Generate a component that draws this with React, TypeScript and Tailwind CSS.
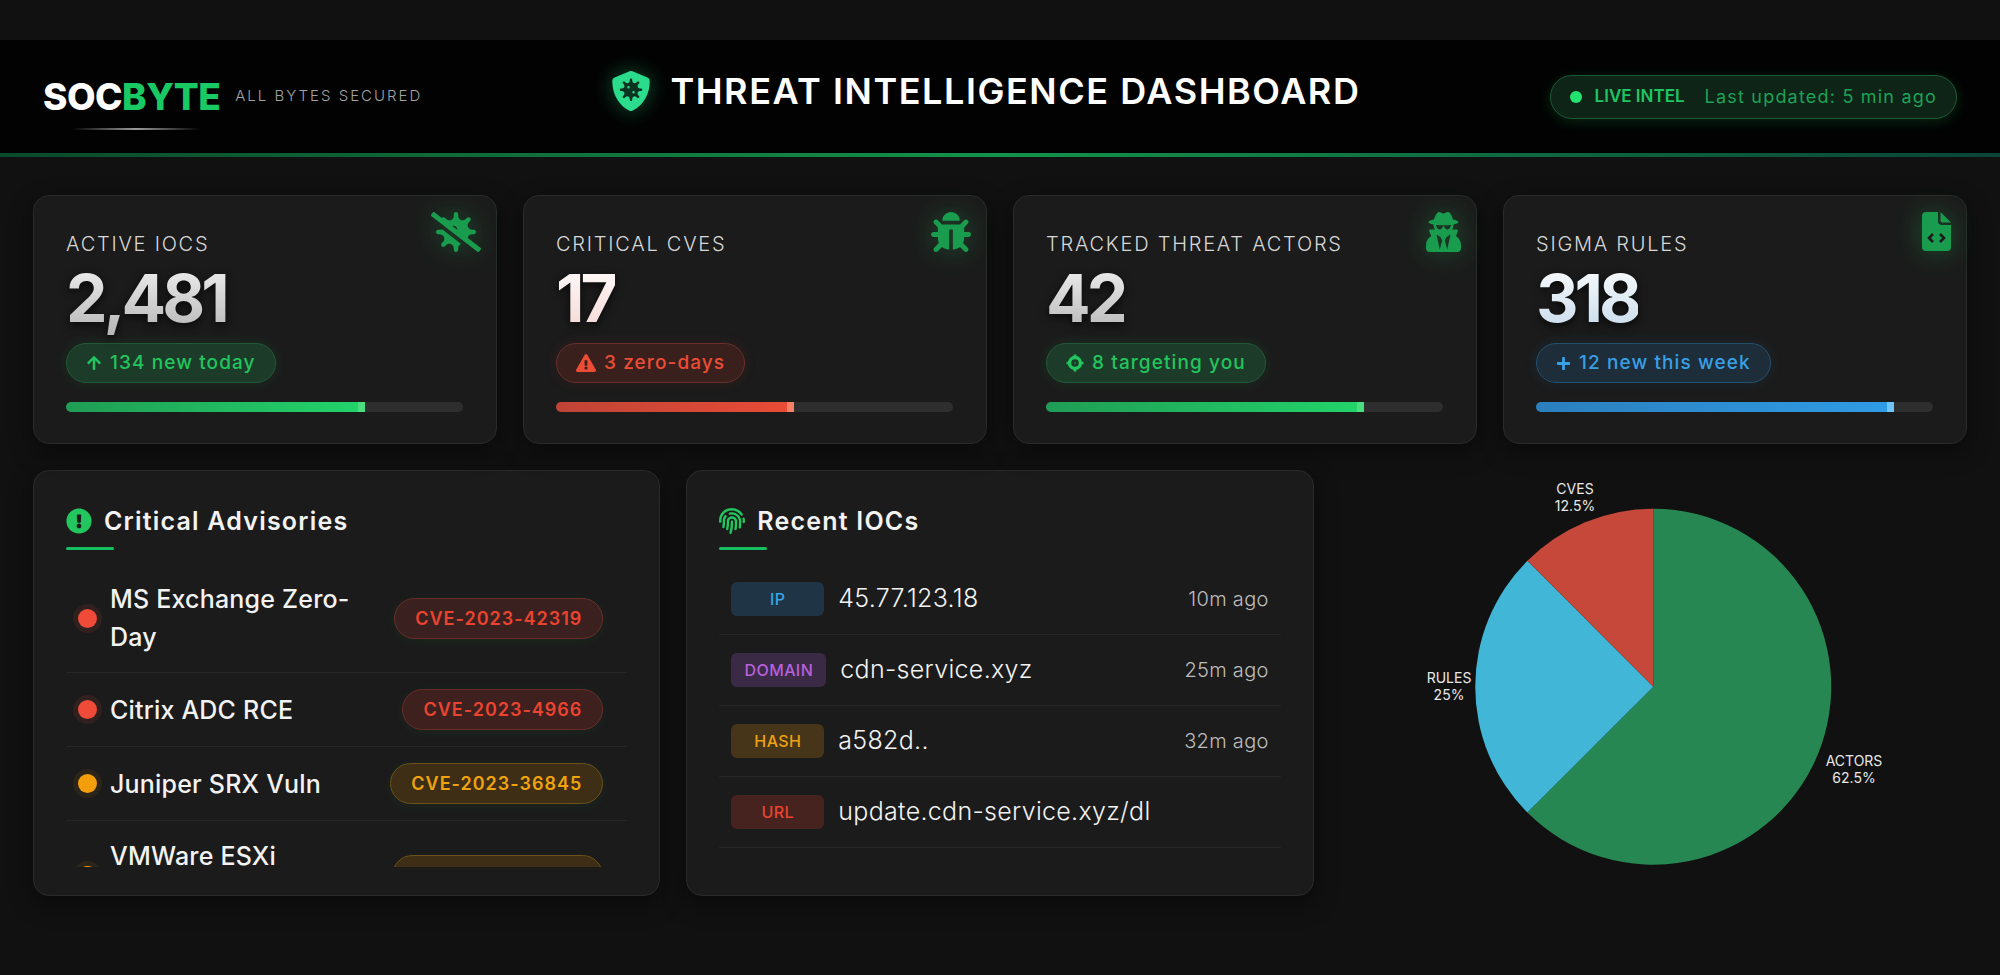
import {
  FaArrowUp,
  FaBug,
  FaExclamationCircle,
  FaExclamationTriangle,
  FaFingerprint,
  FaPlus,
  FaShieldVirus,
  FaUserSecret,
  FaVirusSlash,
} from "react-icons/fa";

function TargetIcon() {
  return (
    <svg className="h-[18px] w-[18px]" viewBox="0 0 18 18" fill="none" stroke="currentColor">
      <circle cx="9" cy="9" r="5.5" strokeWidth="3.4" />
      <path d="M9 0.5V3M9 15V17.5M0.5 9H3M15 9H17.5" strokeWidth="2.6" />
      <circle cx="9" cy="9" r="1" strokeWidth="0" fill="currentColor" opacity="0.5" />
    </svg>
  );
}

function FileCodeIcon() {
  return (
    <svg className="h-[39px] w-[29px]" viewBox="0 0 29 39" fill="currentColor">
      <path d="M4 0H16V9Q16 13 20 13H29V35Q29 39 25 39H4Q0 39 0 35V4Q0 0 4 0Z" />
      <path d="M18.5 0L29 10.5H20.5Q18.5 10.5 18.5 8.5Z" />
      <path d="M11 22L7 26L11 30M18 22L22 26L18 30" fill="none" stroke="#1b1b1b" strokeWidth="2.6" />
    </svg>
  );
}

const stats = [
  {
    label: "ACTIVE IOCS",
    value: "2,481",
    icon: <FaVirusSlash className="w-[50px] h-[40px]" />,
    badgeIcon: <FaArrowUp className="w-[16px] h-[16px]" />,
    badge: "134 new today",
    pct: 75.3,
    num: "from-[#f4f4f4] to-[#b4b4b4]",
    badgeClass: "text-[#22c55e] bg-[#1d3b29] border-[#22593a] shadow-[0_0_14px_rgba(34,197,94,0.12)]",
    bar: "from-[#1f9d55] to-[#22d56b]",
    tip: "bg-[#4ade80]",
  },
  {
    label: "CRITICAL CVES",
    value: "17",
    icon: <FaBug className="w-[40px] h-[40px]" />,
    badgeIcon: <FaExclamationTriangle className="w-[20px] h-[18px]" />,
    badge: "3 zero-days",
    pct: 60,
    num: "from-white to-[#f3d5d2]",
    badgeClass: "text-[#ea4c36] bg-[#3a201d] border-[#6a2f28] shadow-[0_0_14px_rgba(239,68,68,0.1)]",
    bar: "from-[#bf4436] to-[#ea4c36]",
    tip: "bg-[#f77f66]",
  },
  {
    label: "TRACKED THREAT ACTORS",
    value: "42",
    icon: <FaUserSecret className="w-[35px] h-[40px]" />,
    badgeIcon: <TargetIcon />,
    badge: "8 targeting you",
    pct: 80,
    num: "from-[#f4f4f4] to-[#b4b4b4]",
    badgeClass: "text-[#22c55e] bg-[#1d3b29] border-[#22593a] shadow-[0_0_14px_rgba(34,197,94,0.12)]",
    bar: "from-[#1f9d55] to-[#22d56b]",
    tip: "bg-[#4ade80]",
  },
  {
    label: "SIGMA RULES",
    value: "318",
    icon: <FileCodeIcon />,
    badgeIcon: <FaPlus className="w-[15px] h-[15px]" />,
    badge: "12 new this week",
    pct: 90.2,
    num: "from-white to-[#c4d8ea]",
    badgeClass: "text-[#39a0e6] bg-[#1d2d3a] border-[#23506f] shadow-[0_0_14px_rgba(56,160,230,0.1)]",
    bar: "from-[#2b7fbd] to-[#2f9ce6]",
    tip: "bg-[#6cc4f7]",
  },
];

const advisories = [
  {
    name: "MS Exchange Zero-Day",
    cve: "CVE-2023-42319",
    dot: "bg-[#f04a38] shadow-[0_0_0_5px_rgba(240,74,56,0.1)]",
    pill: "text-[#ea4430] bg-[#3a211f] border-[#6b2d27] shadow-[0_2px_12px_rgba(34,197,94,0.08)]",
    nameClass: "",
  },
  {
    name: "Citrix ADC RCE",
    cve: "CVE-2023-4966",
    dot: "bg-[#f04a38] shadow-[0_0_0_5px_rgba(240,74,56,0.1)]",
    pill: "text-[#ea4430] bg-[#3e201f] border-[#6b2d27] shadow-[0_2px_12px_rgba(34,197,94,0.08)]",
    nameClass: "",
  },
  {
    name: "Juniper SRX Vuln",
    cve: "CVE-2023-36845",
    dot: "bg-[#f59e0b] shadow-[0_0_0_5px_rgba(245,158,11,0.08)]",
    pill: "text-[#f0a30f] bg-[#3d2e15] border-[#6c5118] shadow-[0_2px_12px_rgba(34,197,94,0.08)]",
    nameClass: "",
  },
  {
    name: "VMWare ESXi",
    cve: "CVE-2023-20867",
    dot: "bg-[#f59e0b] shadow-[0_0_0_5px_rgba(245,158,11,0.08)]",
    pill: "text-[#f0a30f] bg-[#3d2e15] border-[#6c5118]",
    nameClass: "min-h-[76px]",
  },
];

const iocs = [
  { type: "IP", value: "45.77.123.18", time: "10m ago", tag: "text-[#38a6e8] bg-[#1f3444] w-[93px]" },
  { type: "DOMAIN", value: "cdn-service.xyz", time: "25m ago", tag: "text-[#b860dc] bg-[#3a2a46] w-[95px]" },
  { type: "HASH", value: "a582d..", time: "32m ago", tag: "text-[#f0a014] bg-[#463518] w-[93px]" },
  { type: "URL", value: "update.cdn-service.xyz/dl", time: "", tag: "text-[#ea4430] bg-[#46231f] w-[93px]" },
];

function StatCard({ stat }: { stat: (typeof stats)[number] }) {
  return (
    <div className="relative h-[249px] rounded-2xl border border-[#272c29] bg-[#1b1b1b] pl-[32px] pr-[33px] pt-[34px] shadow-[0_8px_24px_rgba(0,0,0,0.45)]">
      <div className="absolute top-[16px] right-[15px] text-[#1a9c4e] drop-shadow-[0_0_14px_rgba(34,197,94,0.35)]">
        {stat.icon}
      </div>
      <div className="text-[20px] leading-[28px] font-light tracking-[1.75px] text-[#d8d8d8]">{stat.label}</div>
      <div className="mt-[8px] h-[64px] text-[66px] leading-[64px] font-bold tracking-[-4px] drop-shadow-[0_3px_5px_rgba(0,0,0,0.7)]">
        <span className={`bg-linear-to-b ${stat.num} bg-clip-text text-transparent`}>{stat.value}</span>
      </div>
      <div
        className={`mt-[13px] inline-flex h-[40px] items-center gap-[8px] rounded-full border px-[19px] text-[19px] font-medium tracking-[1.1px] ${stat.badgeClass}`}
      >
        {stat.badgeIcon}
        {stat.badge}
      </div>
      <div className="mt-[19px] h-[10px] rounded-full bg-[#2e2e2e]">
        <div
          className={`relative h-full rounded-l-full bg-linear-to-r ${stat.bar}`}
          style={{ width: `${stat.pct}%` }}
        >
          <div className={`absolute right-0 top-0 h-full w-[7px] ${stat.tip}`} />
        </div>
      </div>
    </div>
  );
}

function PanelTitle({ icon, title }: { icon: React.ReactNode; title: string }) {
  return (
    <div>
      <div className="flex items-center gap-[12px]">
        <span className="text-[#22c55e]">{icon}</span>
        <h2 className="text-[25px] leading-[36px] font-semibold tracking-[1.2px] text-[#f2f2f2]">{title}</h2>
      </div>
      <div className="mt-[8px] h-[3px] w-[48px] rounded-full bg-[#16c060]" />
    </div>
  );
}

function PieChart() {
  return (
    <svg className="h-[426px] w-[627px]" viewBox="0 0 627 426">
      <path d="M313.3 216.7 L313.3 38.7 A178 178 0 1 1 187.4 342.6 Z" fill="#268752" />
      <path d="M313.3 216.7 L187.4 342.6 A178 178 0 0 1 187.4 90.8 Z" fill="#41b6d6" />
      <path d="M313.3 216.7 L187.4 90.8 A178 178 0 0 1 313.3 38.7 Z" fill="#c5483b" />
      <g fill="#e8e8e8" fontSize="14" textAnchor="middle">
        <text x="235" y="24">CVES</text>
        <text x="235" y="41">12.5%</text>
        <text x="109" y="213">RULES</text>
        <text x="109" y="230">25%</text>
        <text x="514" y="296">ACTORS</text>
        <text x="514" y="313">62.5%</text>
      </g>
    </svg>
  );
}

export default function App() {
  return (
    <div className="h-[975px] w-[2000px] overflow-hidden bg-[#111111] pt-[40px] font-[family-name:Inter,sans-serif]">
      <header className="flex h-[113px] items-center justify-between bg-[#020202] px-[43px]">
        <div className="relative flex items-center">
          <span className="text-[37px] leading-none font-extrabold tracking-[-0.5px] text-white">
            SOC<span className="text-[#18c964]">BYTE</span>
          </span>
          <span className="ml-[15px] text-[15px] font-light tracking-[2px] text-[#a3a3a3]">ALL BYTES SECURED</span>
          <div className="absolute left-[29px] top-[50px] h-[2px] w-[128px] bg-linear-to-r from-transparent via-[#9a9a9a] to-transparent" />
        </div>
        <div className="flex items-center gap-[19px] pb-[12px]">
          <FaShieldVirus className="h-[40px] w-[40px] text-[#2bdc8c] drop-shadow-[0_0_10px_rgba(43,220,140,0.45)]" />
          <h1 className="text-[36px] leading-none font-semibold tracking-[1.55px] text-white">
            THREAT INTELLIGENCE DASHBOARD
          </h1>
        </div>
        <div className="flex h-[44px] items-center rounded-full border border-[#1c5a36] bg-[#0d2417] pl-[19px] pr-[19px] shadow-[0_3px_14px_rgba(34,197,94,0.2)]">
          <span className="h-[12px] w-[12px] rounded-full bg-[#22e36f]" />
          <span className="ml-[13px] text-[17px] font-semibold text-[#1fc463]">LIVE INTEL</span>
          <span className="ml-[20px] text-[18px] tracking-[1.2px] text-[#1ea257]">Last updated: 5 min ago</span>
        </div>
      </header>
      <div className="h-[4px] bg-linear-to-r from-[#0a4a2b] via-[#13934a] to-[#0a4536]" />

      <main className="px-[33px] pt-[38px]">
        <section className="grid grid-cols-4 gap-[26px]">
          {stats.map((stat) => (
            <StatCard key={stat.label} stat={stat} />
          ))}
        </section>

        <section className="mt-[26px] grid grid-cols-3 gap-[26px]">
          <div className="flex h-[426px] flex-col rounded-2xl border border-[#272c29] bg-[#1b1b1b] px-[32px] pt-[32px] pb-[28px] shadow-[0_8px_24px_rgba(0,0,0,0.45)]">
            <PanelTitle icon={<FaExclamationCircle className="h-[26px] w-[26px]" />} title="Critical Advisories" />
            <div className="mt-[14px] flex-1 overflow-hidden">
              {advisories.map((item) => (
                <div key={item.cve} className="flex items-center border-b border-[#262626] py-[16px] pl-[12px] pr-[24px]">
                  <span className={`h-[19px] w-[19px] shrink-0 rounded-full ${item.dot}`} />
                  <span className={`ml-[13px] w-[250px] text-[25px] leading-[38px] font-medium tracking-[0.2px] text-[#f2f2f2] ${item.nameClass}`}>
                    {item.name}
                  </span>
                  <span
                    className={`ml-auto flex h-[41px] items-center rounded-full border px-[20px] text-[18px] font-semibold tracking-[1px] ${item.pill}`}
                  >
                    {item.cve}
                  </span>
                </div>
              ))}
            </div>
          </div>

          <div className="flex h-[426px] flex-col rounded-2xl border border-[#272c29] bg-[#1b1b1b] px-[32px] pt-[32px] shadow-[0_8px_24px_rgba(0,0,0,0.45)]">
            <PanelTitle icon={<FaFingerprint className="h-[26px] w-[26px]" />} title="Recent IOCs" />
            <div className="mt-[14px]">
              {iocs.map((item) => (
                <div key={item.type} className="flex h-[71px] items-center border-b border-[#262626] px-[12px]">
                  <span
                    className={`flex h-[34px] shrink-0 items-center justify-center rounded-md text-[16px] font-medium tracking-[0.4px] ${item.tag}`}
                  >
                    {item.type}
                  </span>
                  <span className="ml-[14px] text-[25px] font-light tracking-[0.3px] text-[#f2f2f2]">{item.value}</span>
                  {item.time && <span className="ml-auto text-[20px] font-light tracking-[0.3px] text-[#bdbdbd]">{item.time}</span>}
                </div>
              ))}
            </div>
          </div>

          <div className="h-[426px]">
            <PieChart />
          </div>
        </section>
      </main>
    </div>
  );
}
